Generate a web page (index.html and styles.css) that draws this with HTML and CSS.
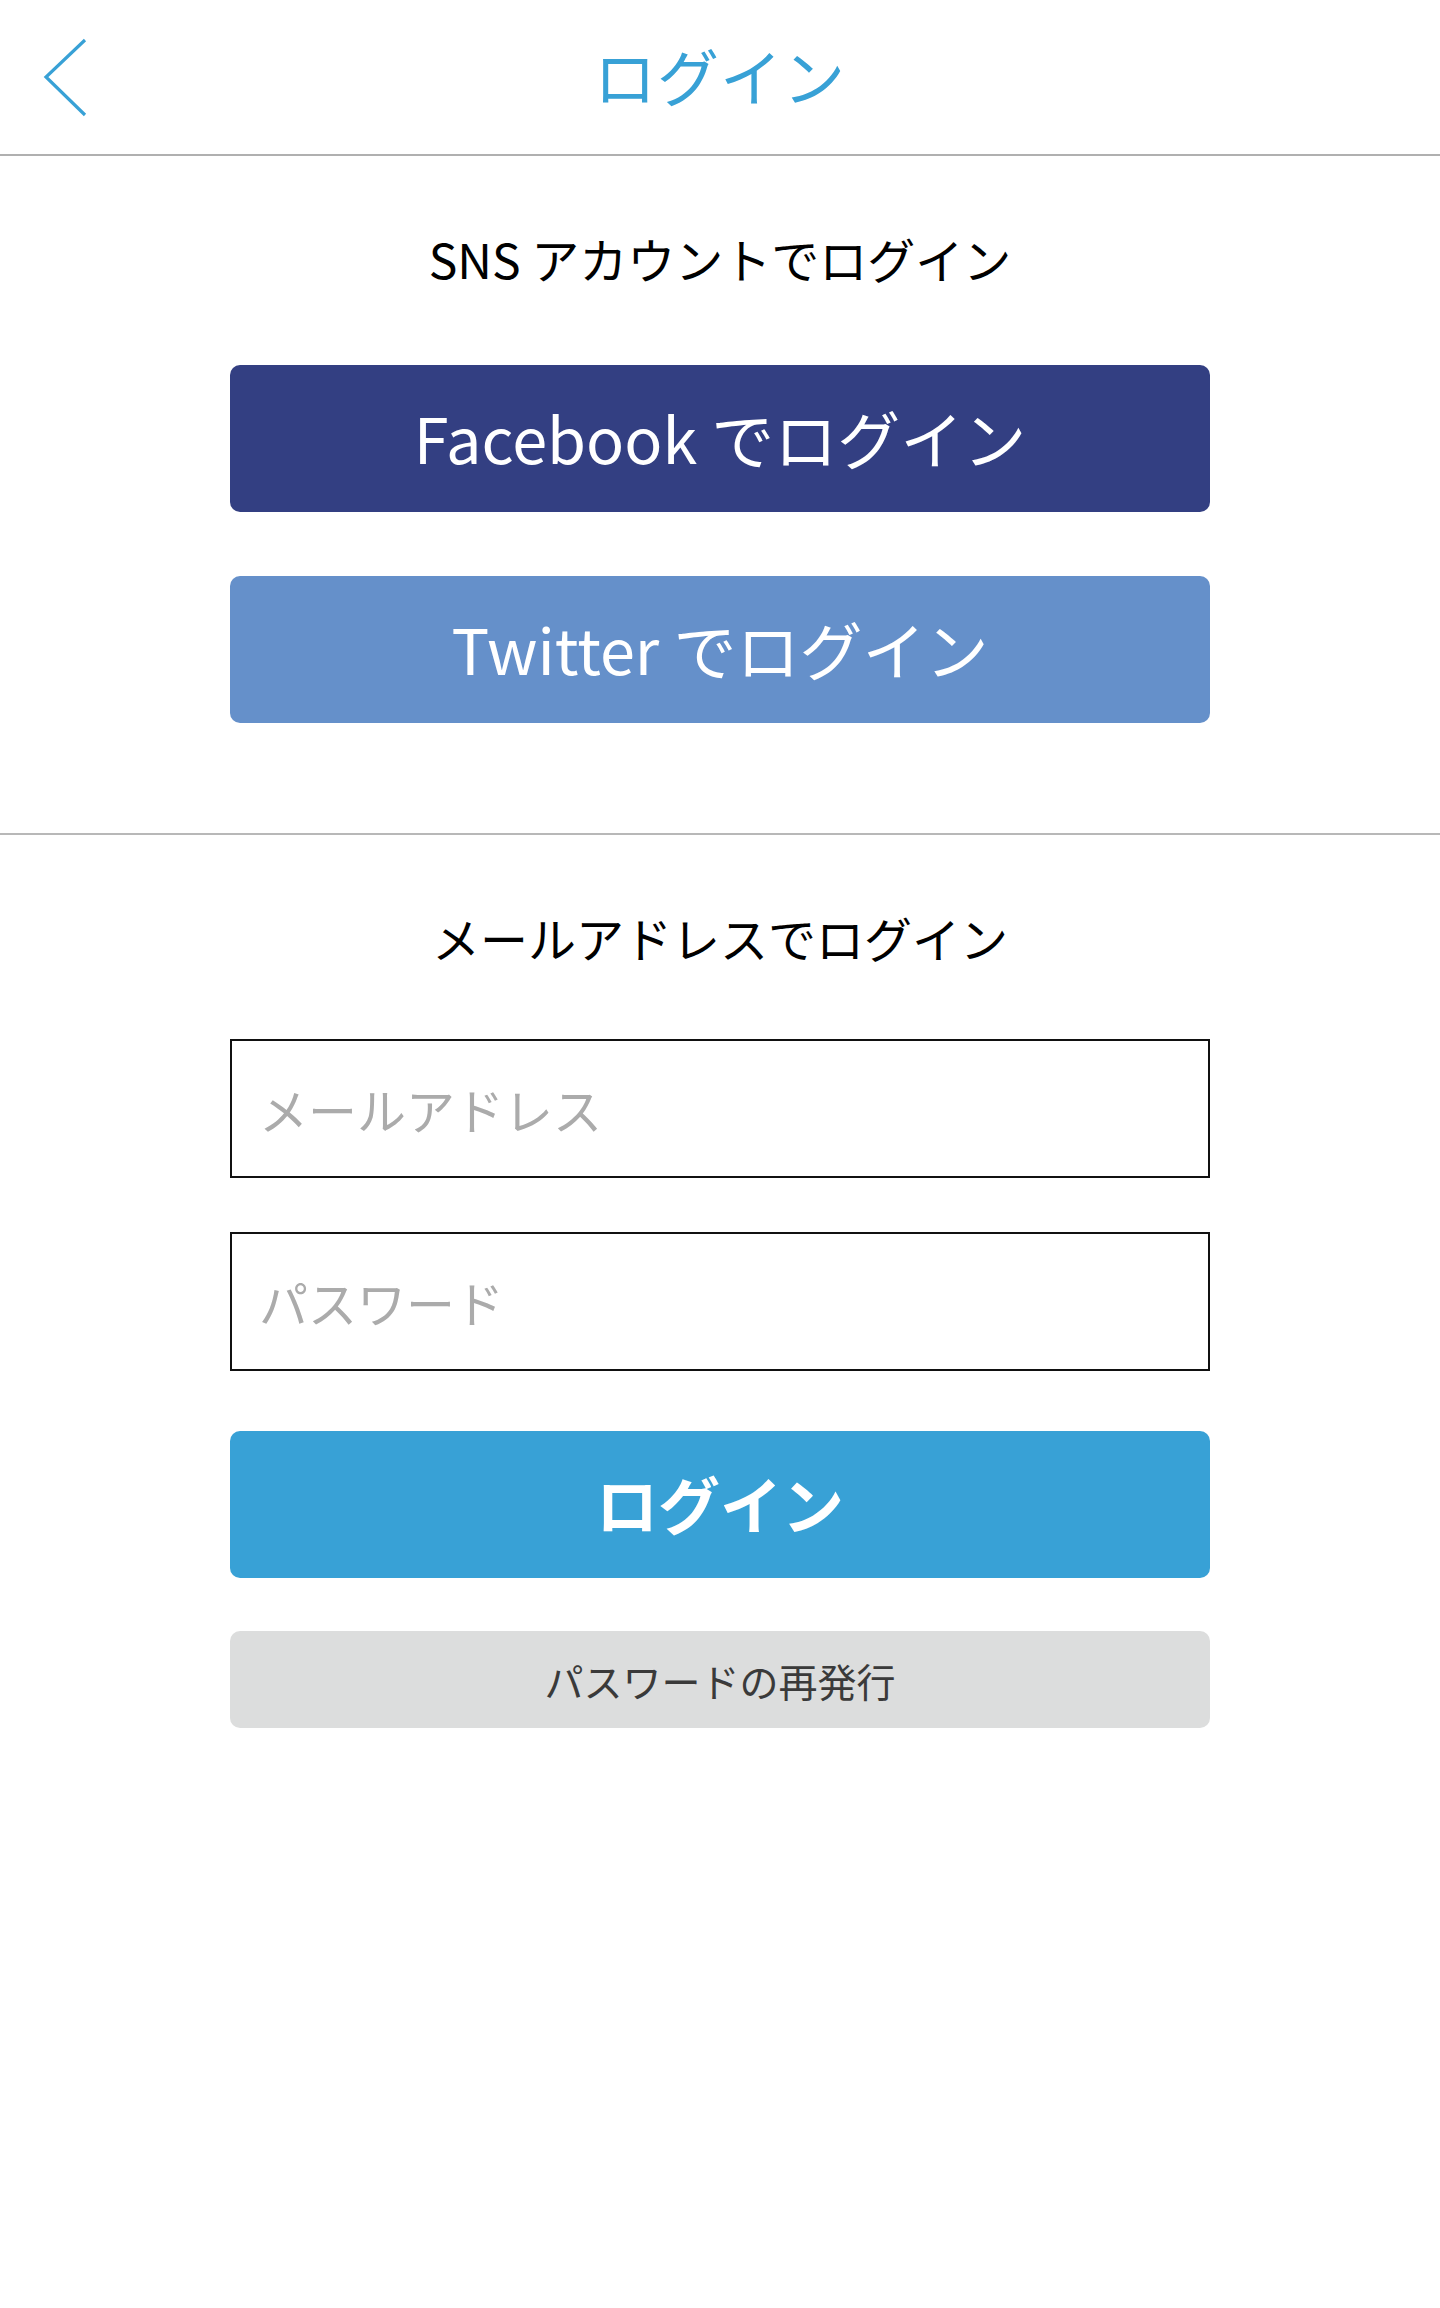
FILE: index.html
```html
<!DOCTYPE html>
<html lang="ja">
<head>
<meta charset="utf-8">
<title>ログイン</title>
<link rel="stylesheet" href="styles.css">
</head>
<body>
<header class="topbar">
  <a class="back" href="#" aria-label="戻る">
    <svg width="50" height="84" viewBox="0 0 50 84"><polyline points="45,4 6,41 45,79" fill="none" stroke="#38a1d6" stroke-width="3.2" stroke-linejoin="miter"/></svg>
  </a>
  <h1 class="title">ログイン</h1>
</header>
<main>
  <section class="section sns">
    <h2 class="heading">SNS アカウントでログイン</h2>
    <div class="stack">
      <button class="btn btn-fb">Facebook でログイン</button>
      <button class="btn btn-tw">Twitter でログイン</button>
    </div>
  </section>
  <section class="section mail">
    <h2 class="heading">メールアドレスでログイン</h2>
    <form class="form">
      <input class="field" type="email" placeholder="メールアドレス">
      <input class="field field-pw" type="password" placeholder="パスワード">
      <button class="btn btn-login" type="button">ログイン</button>
      <button class="btn btn-reissue" type="button">パスワードの再発行</button>
    </form>
  </section>
</main>
</body>
</html>
```
FILE: styles.css
```css
* { box-sizing: border-box; }
html, body {
  margin: 0;
  padding: 0;
  background: #fff;
  font-family: "Noto Sans CJK JP", "Noto Sans", sans-serif;
  color: #000;
}
.topbar {
  position: relative;
  height: 156px;
  border-bottom: 2px solid #b0b0b0;
  display: flex;
  align-items: center;
  justify-content: center;
  padding-bottom: 4px;
}
.back {
  position: absolute;
  left: 40px;
  top: 36px;
  display: block;
  width: 50px;
  height: 84px;
}
.back svg { display: block; }
.title {
  margin: 0;
  font-size: 62px;
  font-weight: 400;
  color: #38a1d6;
  line-height: 1;
  letter-spacing: 1px;
}
.section {
  display: flex;
  flex-direction: column;
  align-items: center;
}
.sns {
  padding: 72px 0 110px;
  border-bottom: 2px solid #b8b8b8;
}
.mail {
  padding: 72px 0 40px;
}
.heading {
  margin: 0;
  height: 60px;
  line-height: 60px;
  font-size: 48px;
  font-weight: 400;
  color: #000;
}
.stack {
  margin-top: 77px;
  display: flex;
  flex-direction: column;
  gap: 64px;
}
.btn {
  display: block;
  width: 980px;
  border: none;
  border-radius: 10px;
  font-family: inherit;
  color: #fff;
  padding: 0;
  cursor: pointer;
}
.btn-fb, .btn-tw {
  height: 147px;
  font-size: 63px;
  font-weight: 400;
  padding-bottom: 4px;
}
.btn-fb { background: #333f82; }
.btn-tw { background: #6590ca; }
.form {
  margin: 72px 0 0;
  display: flex;
  flex-direction: column;
}
.field {
  width: 980px;
  height: 139px;
  border: 2px solid #111;
  border-radius: 0;
  padding: 0 27px;
  font-family: inherit;
  font-size: 49px;
  color: #000;
  outline: none;
  background: #fff;
}
.field::placeholder { color: #ababab; }
.field-pw { margin-top: 54px; }
.btn-login {
  margin-top: 60px;
  height: 147px;
  background: #38a1d6;
  font-size: 62px;
  font-weight: 700;
  padding-bottom: 4px;
}
.btn-reissue {
  margin-top: 53px;
  height: 97px;
  background: #dcdddd;
  color: #3a3a3a;
  font-size: 39px;
  font-weight: 400;
}
```
